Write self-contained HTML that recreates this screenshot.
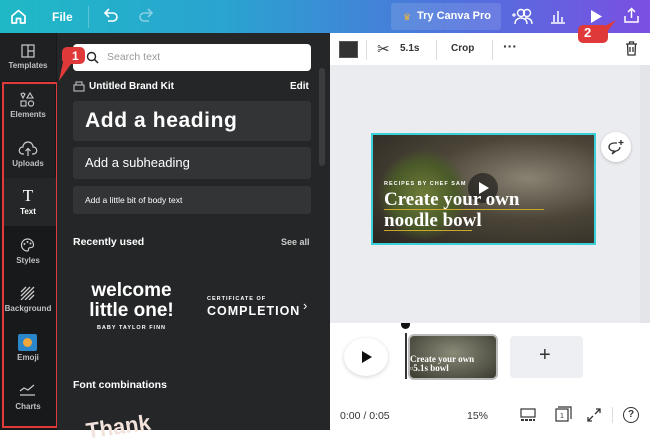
<!DOCTYPE html>
<html><head><meta charset="utf-8"><style>
*{margin:0;padding:0;box-sizing:border-box}
body{width:650px;height:430px;overflow:hidden;position:relative;font-family:"Liberation Sans",sans-serif;background:#fff}
.a{position:absolute}
.top{left:0;top:0;width:650px;height:33px;background:linear-gradient(90deg,#1fb9c6 0%,#2aa3d0 35%,#4f72dc 70%,#7b4fe3 100%)}
.nav{left:0;top:33px;width:57px;height:397px;background:#18191b}
.ni{position:absolute;left:0;width:56px;text-align:center;color:#bfc0c2;font-size:8px;font-weight:bold}
.panel{left:57px;top:33px;width:273px;height:397px;background:#252627}
.wt{color:#fff;font-weight:bold}
</style></head><body>
<div class="a top"></div>
<svg class="a" style="left:10px;top:8px" width="17" height="17" viewBox="0 0 17 17"><path d="M2 8 L8.5 2.5 L15 8 V15 H10.5 V10.5 H6.5 V15 H2 Z" fill="none" stroke="#fff" stroke-width="1.7" stroke-linejoin="round"/></svg>
<div class="a wt" style="left:52px;top:10px;font-size:12px">File</div>
<div class="a" style="left:88px;top:6px;width:1px;height:22px;background:rgba(255,255,255,.25)"></div>
<svg class="a" style="left:103px;top:8px" width="16" height="14" viewBox="0 0 16 14"><path d="M3 5 H10 A4 4 0 0 1 10 13 H5 M6 1 L2 5 L6 9" fill="none" stroke="#fff" stroke-width="1.6"/></svg>
<svg class="a" style="left:138px;top:8px" width="16" height="14" viewBox="0 0 16 14"><path d="M13 5 H6 A4 4 0 0 0 6 13 H11 M10 1 L14 5 L10 9" fill="none" stroke="rgba(255,255,255,.45)" stroke-width="1.6"/></svg>
<div class="a" style="left:391px;top:3px;width:110px;height:27px;background:rgba(255,255,255,.12);border-radius:3px"></div>
<div class="a" style="left:403px;top:12px;color:#f5b731;font-size:9px">♛</div>
<div class="a wt" style="left:417px;top:10px;font-size:11px">Try Canva Pro</div>
<svg class="a" style="left:512px;top:7px" width="22" height="18" viewBox="0 0 22 18"><circle cx="9" cy="6" r="3.5" fill="none" stroke="#fff" stroke-width="1.4"/><circle cx="15" cy="6" r="3.5" fill="none" stroke="#fff" stroke-width="1.4"/><path d="M3 17 C3 12 7 11 9 11 C11 11 15 12 15 17 M13 11 C16 11 20 12 20 17" fill="none" stroke="#fff" stroke-width="1.4"/><path d="M0 8 H4 M2 6 V10" stroke="#fff" stroke-width="1.2"/></svg>
<svg class="a" style="left:550px;top:8px" width="16" height="16" viewBox="0 0 16 16"><path d="M1 15 H15 M4 14 V7 M8 14 V3 M12 14 V9" stroke="#fff" stroke-width="1.5"/></svg>
<svg class="a" style="left:589px;top:9px" width="14" height="15" viewBox="0 0 14 15"><path d="M2 1 L13 7.5 L2 14 Z" fill="#fff"/></svg>
<svg class="a" style="left:623px;top:7px" width="17" height="17" viewBox="0 0 17 17"><path d="M8.5 11 V2 M5 5 L8.5 1.5 L12 5 M2 9 V15 H15 V9" fill="none" stroke="#fff" stroke-width="1.5"/></svg>
<svg class="a" style="left:575px;top:18px" width="65" height="30" viewBox="0 0 65 30"><path d="M26 10 L41 2 L32 14 Z" fill="#e0393a"/><rect x="3" y="7" width="30" height="18" rx="5" fill="#e0393a"/></svg>
<div class="a wt" style="left:584px;top:25px;font-size:13px">2</div>

<div class="a nav"></div>
<div class="a" style="left:0;top:33px;width:56px;height:48px;background:#1f2022"></div>
<div class="a" style="left:3px;top:83px;width:52px;height:95px;background:#1f2022"></div>
<div class="a" style="left:3px;top:178px;width:53px;height:48px;background:#252627"></div>
<svg class="a" style="left:21px;top:44px" width="14" height="14" viewBox="0 0 14 14"><rect x="1" y="1" width="12" height="12" fill="none" stroke="#ccc" stroke-width="1.2"/><path d="M7 1 V13 M7 7 H13" stroke="#ccc" stroke-width="1.2"/></svg>
<div class="ni" style="top:61px">Templates</div>
<svg class="a" style="left:19px;top:91px" width="17" height="17" viewBox="0 0 17 17"><path d="M2 3 L4 2 L6 3 L4 7 Z M11 2 L14 7 H8 Z" fill="none" stroke="#ccc" stroke-width="1.1"/><rect x="2" y="10" width="5" height="5" fill="none" stroke="#ccc" stroke-width="1.1"/><circle cx="12" cy="12.5" r="2.6" fill="none" stroke="#ccc" stroke-width="1.1"/></svg>
<div class="ni" style="top:110px">Elements</div>
<svg class="a" style="left:18px;top:141px" width="20" height="16" viewBox="0 0 20 16"><path d="M6 13 H4.5 A3.5 3.5 0 0 1 5 6 A5 5 0 0 1 15 6 A3.5 3.5 0 0 1 15.5 13 H14 M10 15 V8 M7.5 10 L10 7.5 L12.5 10" fill="none" stroke="#ccc" stroke-width="1.2"/></svg>
<div class="ni" style="top:159px">Uploads</div>
<div class="a" style="left:0;top:186px;width:56px;text-align:center;color:#fff;font-family:'Liberation Serif',serif;font-size:17px">T</div>
<div class="ni" style="top:207px;color:#fff">Text</div>
<svg class="a" style="left:20px;top:238px" width="15" height="14" viewBox="0 0 15 14"><path d="M7.5 1 A6 6 0 1 0 7.5 13 C9 13 8 11 9 10 C10 9 13.5 10.5 13.5 7 A6 6 0 0 0 7.5 1Z" fill="none" stroke="#ccc" stroke-width="1.2"/><circle cx="4.5" cy="6" r="1" fill="#ccc"/><circle cx="7.5" cy="4" r="1" fill="#ccc"/><circle cx="10.5" cy="5.5" r="1" fill="#ccc"/></svg>
<div class="ni" style="top:256px">Styles</div>
<svg class="a" style="left:20px;top:286px" width="15" height="14" viewBox="0 0 15 14"><path d="M1 6 L6 1 M1 10 L10 1 M1 14 L14 1 M5 14 L14 5 M9 14 L14 9" stroke="#ccc" stroke-width="1.3"/></svg>
<div class="ni" style="top:304px">Background</div>
<div class="a" style="left:18px;top:334px;width:19px;height:17px;background:#2a86c8;border-radius:2px"></div>
<div class="a" style="left:23px;top:338px;width:9px;height:9px;border-radius:50%;background:#f0a63a"></div>
<div class="ni" style="top:353px">Emoji</div>
<svg class="a" style="left:19px;top:383px" width="17" height="14" viewBox="0 0 17 14"><path d="M1 8 L5 5 L9 7 L15 2 M1 12 H16" fill="none" stroke="#ccc" stroke-width="1.2"/></svg>
<div class="ni" style="top:402px">Charts</div>
<div class="a" style="left:2px;top:82px;width:56px;height:346px;border:2px solid #e03b3b"></div>

<div class="a panel"></div>
<div class="a" style="left:73px;top:44px;width:238px;height:27px;background:#fff;border-radius:4px"></div>
<svg class="a" style="left:86px;top:51px" width="13" height="13" viewBox="0 0 13 13"><circle cx="5.5" cy="5.5" r="4" fill="none" stroke="#222" stroke-width="1.4"/><path d="M8.5 8.5 L12 12" stroke="#222" stroke-width="1.5"/></svg>
<div class="a" style="left:107px;top:51px;font-size:10.5px;color:#999">Search text</div>
<svg class="a" style="left:55px;top:44px" width="40" height="40" viewBox="0 0 40 40"><path d="M8 18 L4 37 L16 20 Z" fill="#e0393a"/><rect x="7" y="3" width="23" height="17" rx="5" fill="#e0393a"/></svg>
<div class="a wt" style="left:72px;top:49px;font-size:12px">1</div>
<div class="a" style="left:319px;top:68px;width:6px;height:98px;background:#3b3c3e;border-radius:3px"></div>
<svg class="a" style="left:73px;top:80px" width="12" height="12" viewBox="0 0 12 12"><rect x="1" y="5" width="10" height="6" fill="none" stroke="#ccc"/><path d="M3 5 V2 H9 V5" fill="none" stroke="#ccc"/></svg>
<div class="a wt" style="left:89px;top:81px;font-size:10px">Untitled Brand Kit</div>
<div class="a wt" style="left:290px;top:81px;font-size:10px">Edit</div>
<div class="a" style="left:73px;top:101px;width:238px;height:40px;background:#333436;border-radius:3px"></div>
<div class="a wt" style="left:85px;top:109px;font-size:21px;letter-spacing:.6px">Add a heading</div>
<div class="a" style="left:73px;top:147px;width:238px;height:32px;background:#333436;border-radius:3px"></div>
<div class="a" style="left:85px;top:155px;font-size:13px;color:#fff">Add a subheading</div>
<div class="a" style="left:73px;top:186px;width:238px;height:28px;background:#333436;border-radius:3px"></div>
<div class="a" style="left:85px;top:195px;font-size:8.5px;color:#fff">Add a little bit of body text</div>
<div class="a wt" style="left:73px;top:236px;font-size:10.5px">Recently used</div>
<div class="a" style="left:281px;top:237px;font-size:9px;color:#ccc;font-weight:bold">See all</div>
<div class="a wt" style="left:84px;top:281px;width:95px;text-align:center;font-size:19px;line-height:20px">welcome<br>little one!</div>
<div class="a wt" style="left:84px;top:325px;width:95px;text-align:center;font-size:5.5px;letter-spacing:1px">BABY TAYLOR FINN</div>
<div class="a wt" style="left:207px;top:296px;font-size:5.5px;letter-spacing:1px">CERTIFICATE OF</div>
<div class="a wt" style="left:207px;top:304px;font-size:12.5px;letter-spacing:1px">COMPLETION</div>
<div class="a" style="left:303px;top:298px;font-size:13px;color:#fff">›</div>
<div class="a wt" style="left:73px;top:379px;font-size:10.5px">Font combinations</div>
<div class="a wt" style="left:86px;top:414px;font-size:22px;color:#f3e3dd;transform:rotate(-8deg)">Thank</div>
<div class="a" style="left:330px;top:213px;width:9px;height:36px;background:#252627;border-radius:0 6px 6px 0"></div>
<div class="a" style="left:331px;top:225px;font-size:8px;color:#fff">‹</div>

<div class="a" style="left:339px;top:41px;width:19px;height:17px;background:#333;border:1px solid #555"></div>
<div class="a" style="left:366px;top:40px;width:1px;height:20px;background:#ddd"></div>
<div class="a" style="left:377px;top:40px;font-size:15px;color:#333">✂</div>
<div class="a" style="left:400px;top:43px;font-size:10px;color:#333;font-weight:bold">5.1s</div>
<div class="a" style="left:436px;top:40px;width:1px;height:20px;background:#ddd"></div>
<div class="a" style="left:451px;top:43px;font-size:10px;color:#333;font-weight:bold">Crop</div>
<div class="a" style="left:492px;top:40px;width:1px;height:20px;background:#ddd"></div>
<div class="a" style="left:503px;top:38px;font-size:14px;color:#333;font-weight:bold">···</div>
<svg class="a" style="left:625px;top:41px" width="13" height="15" viewBox="0 0 13 15"><path d="M1 3 H12 M4.5 3 V1 H8.5 V3 M2.5 3 L3 14 H10 L10.5 3 M5 6 V11 M8 6 V11" fill="none" stroke="#333" stroke-width="1.3"/></svg>
<div class="a" style="left:330px;top:65px;width:320px;height:258px;background:#ebecf0"></div>
<div class="a" style="left:640px;top:65px;width:10px;height:258px;background:#e4e5e8"></div>
<div class="a" style="left:371px;top:133px;width:225px;height:112px;border:2px solid #3ad0da;background:radial-gradient(ellipse at 70% 40%,#8a8273 0%,#4b4538 45%,#2a2520 100%)"></div>
<div class="a" style="left:378px;top:150px;width:90px;height:90px;background:radial-gradient(ellipse,#6f7d3a 0%,#4a5a28 50%,rgba(0,0,0,0) 72%)"></div>
<div class="a" style="left:468px;top:173px;width:30px;height:30px;border-radius:50%;background:rgba(20,20,20,.6)"></div>
<svg class="a" style="left:478px;top:181px" width="12" height="14" viewBox="0 0 12 14"><path d="M1 1 L11 7 L1 13 Z" fill="#fff"/></svg>
<div class="a wt" style="left:384px;top:181px;font-size:5.5px;letter-spacing:1px">RECIPES BY CHEF SAM</div>
<div class="a wt" style="left:384px;top:189px;font-family:'Liberation Serif',serif;font-size:19px;line-height:21px">Create your own<br>noodle bowl</div>
<div class="a" style="left:384px;top:209px;width:160px;height:1px;background:#c9a92a"></div>
<div class="a" style="left:384px;top:230px;width:88px;height:1px;background:#c9a92a"></div>
<div class="a" style="left:601px;top:132px;width:30px;height:30px;border-radius:50%;background:#fff;box-shadow:0 1px 3px rgba(0,0,0,.2)"></div>
<svg class="a" style="left:608px;top:139px" width="17" height="16" viewBox="0 0 17 16"><path d="M9 4 H6 A5 4 0 0 0 6 12 L4 15 L8 12 A5 4 0 0 0 12 8" fill="none" stroke="#333" stroke-width="1.3"/><path d="M13 1 V6 M10.5 3.5 H15.5" stroke="#333" stroke-width="1.3"/></svg>
<div class="a" style="left:344px;top:338px;width:44px;height:38px;border-radius:50%;background:#fff;box-shadow:0 1px 4px rgba(0,0,0,.18)"></div>
<svg class="a" style="left:361px;top:350px" width="12" height="14" viewBox="0 0 12 14"><path d="M1 1 L11 7 L1 13 Z" fill="#111"/></svg>
<div class="a" style="left:401px;top:323px;width:9px;height:6px;background:#111;border-radius:0 0 5px 5px"></div>
<div class="a" style="left:405px;top:333px;width:2px;height:46px;background:#333"></div>
<div class="a" style="left:408px;top:334px;width:90px;height:46px;border:2px solid #bbb;border-radius:6px;background:radial-gradient(ellipse at 50% 40%,#8a8a78,#3b3a30)"></div>
<div class="a wt" style="left:410px;top:355px;font-family:'Liberation Serif',serif;font-size:9px;line-height:9px">Create your own<br>▫5.1s bowl</div>
<div class="a" style="left:510px;top:336px;width:73px;height:42px;background:#eeeff2;border-radius:4px"></div>
<div class="a" style="left:539px;top:344px;font-size:20px;color:#333">+</div>
<div class="a" style="left:340px;top:410px;font-size:10.5px;color:#333">0:00 / 0:05</div>
<div class="a" style="left:467px;top:410px;font-size:10.5px;color:#333">15%</div>
<svg class="a" style="left:520px;top:408px" width="16" height="14" viewBox="0 0 16 14"><rect x="1" y="1" width="14" height="8" fill="none" stroke="#333" stroke-width="1.2"/><path d="M1 12 H15" stroke="#333" stroke-width="2" stroke-dasharray="3 1"/></svg>
<svg class="a" style="left:555px;top:406px" width="17" height="16" viewBox="0 0 17 16"><rect x="1" y="3" width="12" height="12" fill="none" stroke="#333" stroke-width="1.2"/><path d="M3 1 H16 V13" fill="none" stroke="#333" stroke-width="1.2"/><text x="5" y="12" font-size="7" font-family="Liberation Sans" fill="#333">1</text></svg>
<svg class="a" style="left:587px;top:408px" width="14" height="14" viewBox="0 0 14 14"><path d="M8 6 L13 1 M9 1 H13 V5 M6 8 L1 13 M1 9 V13 H5" fill="none" stroke="#333" stroke-width="1.3"/></svg>
<div class="a" style="left:612px;top:407px;width:1px;height:16px;background:#ddd"></div>
<div class="a" style="left:623px;top:407px;width:16px;height:16px;border:1.4px solid #333;border-radius:50%;font-size:10px;text-align:center;line-height:13px;color:#333;font-weight:bold">?</div>
</body></html>
